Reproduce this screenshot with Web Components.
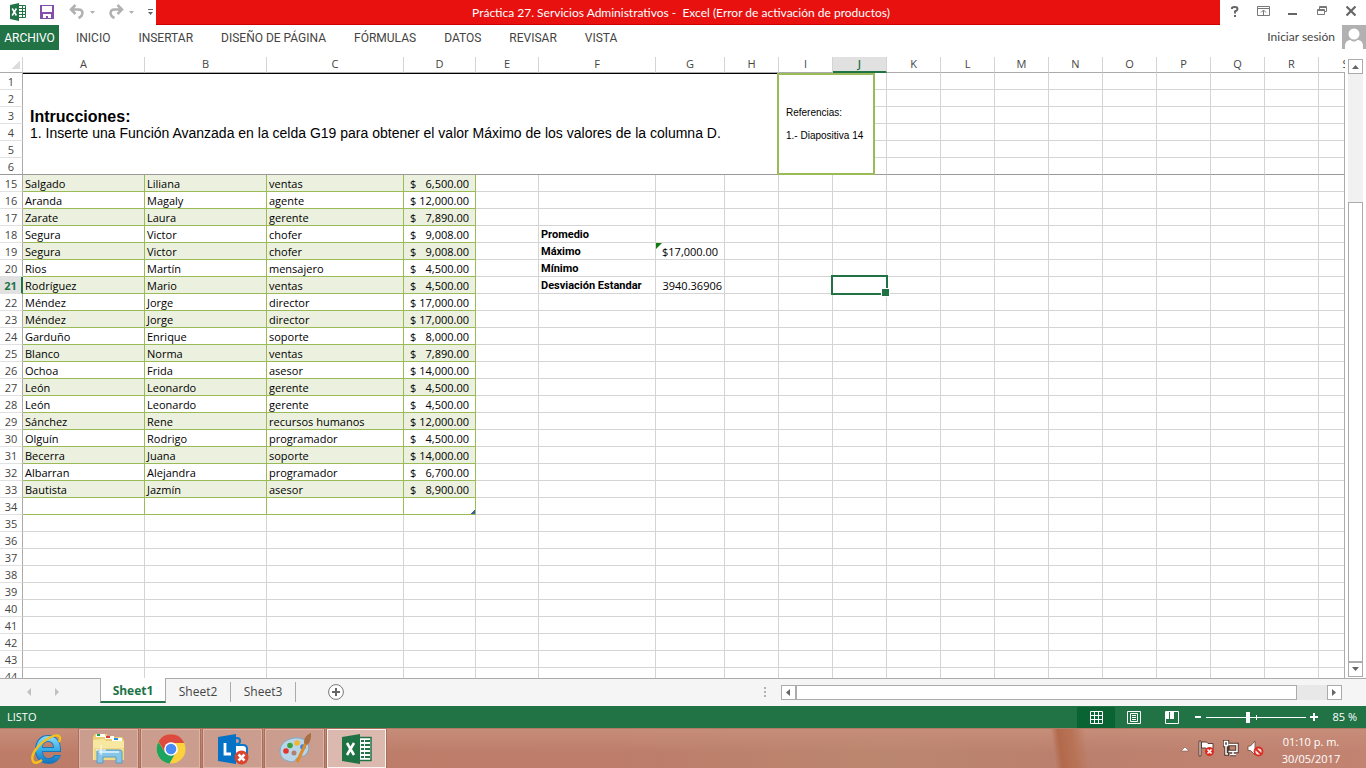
<!DOCTYPE html>
<html lang="es">
<head>
<meta charset="utf-8">
<title>Práctica 27. Servicios Administrativos - Excel</title>
<style>
html,body{margin:0;height:100%}
body{display:flex;flex-direction:column;min-height:100vh;background:#fff;color:#444;font:12px/16px "Open Sans","Noto Sans",sans-serif;overflow:hidden}
work-sheet{flex:1;min-height:0}
</style>
</head>
<body>
<title-bar>Práctica 27. Servicios Administrativos -  Excel (Error de activación de productos)</title-bar>
<ribbon-tabs></ribbon-tabs>
<work-sheet></work-sheet>
<sheet-tabs></sheet-tabs>
<status-bar>LISTO</status-bar>
<task-bar></task-bar>
<script>
const reset = `:host,*{box-sizing:border-box}button{font:inherit;color:inherit;background:none;border:0;padding:0;margin:0;cursor:default}svg{display:block}a{color:inherit;text-decoration:none}`;
const define = (name, markup, init) => customElements.define(name, class extends HTMLElement {
  connectedCallback() {
    if (this.shadowRoot) return;
    const t = document.createElement('template');
    t.innerHTML = markup.replace('<style>', '<style>' + reset);
    this.attachShadow({mode: 'open'}).append(t.content.cloneNode(true));
    if (init) init(this.shadowRoot);
  }
});

define('title-bar', `<style>
:host{display:flex;height:25px;font:12px/25px Lato,"Open Sans",sans-serif}
.qat{width:156px;display:flex;align-items:center;padding:0 0 2px 9px}
.qat button{height:22px;display:flex;align-items:center}
.x{width:31px}.s{width:29px}.u{width:40px}.r{width:39px}
h1{flex:1;margin:0;padding-right:14px;background:#e8110f;border-bottom:1px solid #c00;color:#fff;font:inherit;line-height:25px;text-align:center;white-space:pre;overflow:hidden}
.win{width:146px;display:flex;justify-content:flex-end;padding-right:1px}
.win button{width:29px;display:flex;align-items:center;justify-content:center;height:22px}
</style>
<div class="qat">
<button class="x" aria-label="Excel"><svg width="18" height="18" viewBox="0 0 18 18"><path fill="#217346" d="M1 2l9-2v18l-9-2z"/><path fill="none" stroke="#217346" d="M10 2.500h6.500v12H10"/><path stroke="#217346" d="M10 5.500h6M10 8.500h6M10 11.500h6M13.500 3v11"/><path stroke="#fff" stroke-width="1.600" d="M3.200 5.500l4.200 7M7.400 5.500l-4.200 7"/></svg></button>
<button class="s" aria-label="Guardar"><svg width="14" height="14" viewBox="0 0 14 14"><path fill="#8250ab" d="M0 0h14v14H0z"/><path fill="#fff" d="M2 1h10v6H2zM3 9h8v4H8v-2H6v2H3z"/></svg></button>
<button class="u" aria-label="Deshacer"><svg width="28" height="16" viewBox="0 0 28 16"><path fill="none" stroke="#b1b1b1" stroke-width="2.500" d="M2 5.500h7.500c5 0 5.500 6 0 8.500M6.500 1L2 5.500l4.500 4.500"/><path fill="#b1b1b1" d="M21 7h5l-2.500 3z"/></svg></button>
<button class="r" aria-label="Rehacer"><svg width="28" height="16" viewBox="0 0 28 16"><path fill="none" stroke="#b1b1b1" stroke-width="2.500" d="M13 5.500H5.500c-5 0-5.500 6 0 8.500M8.500 1L13 5.500 8.500 10"/><path fill="#b1b1b1" d="M20 7h5l-2.500 3z"/></svg></button>
<button aria-label="Personalizar"><svg width="6" height="10" viewBox="0 0 6 10"><path stroke="#666" d="M0 2.500h5"/><path fill="#666" d="M0 5h5L2.500 8z"/></svg></button>
</div>
<h1><slot></slot></h1>
<div class="win">
<button aria-label="Ayuda"><svg width="8" height="11" viewBox="0 0 8 11"><path fill="none" stroke="#666" stroke-width="2" d="M1 3V1.800Q1.500 1 4 1q2.500 0 2.500 2Q6.500 4.500 4 5.500V7.500"/><path fill="#666" d="M3 9h2v2H3z"/></svg></button>
<button aria-label="Cinta"><svg width="13" height="10" viewBox="0 0 13 10"><path fill="none" stroke="#777" d="M.5.5h12v9H.5zM1 2.500h11M6.500 9V4.500M4 6.500L6.500 4 9 6.500"/></svg></button>
<button aria-label="Minimizar"><svg width="10" height="10"><path fill="#666" d="M0 7h9v2H0z"/></svg></button>
<button aria-label="Restaurar"><svg width="10" height="10" viewBox="0 0 10 10"><path fill="none" stroke="#777" d="M2.500 3V.5h7v5H7M.5 3.500h7v5h-7z"/><path stroke="#777" d="M2 1.500h8M0 4.500h8"/></svg></button>
<button aria-label="Cerrar"><svg width="10" height="10" viewBox="0 0 10 10"><path stroke="#666" stroke-width="2.200" d="M.5.500l9 9M9.500.500l-9 9"/></svg></button>
</div>`);

define('ribbon-tabs', `<style>
:host{display:flex;height:32px;align-items:flex-start;font:12px/26px Roboto,"Open Sans",sans-serif;color:#444}
.file{background:#217346;color:#fff;width:59px;height:25px;text-align:center}
nav{flex:1;display:flex;gap:28px;padding-left:17px}
button{height:26px;white-space:nowrap}
.user{display:flex;gap:7px;font:12px/24px Lato,"Open Sans",sans-serif}
</style>
<button class="file">ARCHIVO</button>
<nav><button>INICIO</button><button>INSERTAR</button><button>DISEÑO DE PÁGINA</button><button>FÓRMULAS</button><button>DATOS</button><button>REVISAR</button><button>VISTA</button></nav>
<a class="user" href="#">Iniciar sesión<svg width="24" height="24" viewBox="0 0 24 24"><path fill="#b1b1b1" d="M0 0h24v24H0z"/><circle cx="12" cy="9" r="5.500" fill="#fff"/><path fill="#fff" d="M3 24v-3c0-4 3-6 5.500-6 2.500 2 4.500 2 7 0 3 0 5.500 2 5.500 6v3z"/></svg></a>`);

const people = [
['Salgado','Liliana','ventas','6,500.00'],['Aranda','Magaly','agente','12,000.00'],['Zarate','Laura','gerente','7,890.00'],
['Segura','Victor','chofer','9,008.00'],['Segura','Victor','chofer','9,008.00'],['Rios','Martín','mensajero','4,500.00'],
['Rodríguez','Mario','ventas','4,500.00'],['Méndez','Jorge','director','17,000.00'],['Méndez','Jorge','director','17,000.00'],
['Garduño','Enrique','soporte','8,000.00'],['Blanco','Norma','ventas','7,890.00'],['Ochoa','Frida','asesor','14,000.00'],
['León','Leonardo','gerente','4,500.00'],['León','Leonardo','gerente','4,500.00'],['Sánchez','Rene','recursos humanos','12,000.00'],
['Olguín','Rodrigo','programador','4,500.00'],['Becerra','Juana','soporte','14,000.00'],['Albarran','Alejandra','programador','6,700.00'],
['Bautista','Jazmín','asesor','8,900.00']];
const columns = 'ABCDEFGHIJKLMNOPQRS';
const money = n => `<div class="money"><span>$</span><span>${n}</span></div>`;
const extras = {
  F18: '<b>Promedio</b>', F19: '<b>Máximo</b>', F20: '<b>Mínimo</b>', F21: '<b>Desviación Estandar</b>',
  G19: '<i class="flag"></i>' + money('17,000.00'), G21: '<div class="num">3940.36906</div>',
  J21: '<i class="cursor"></i>', D34: '<i class="corner"></i>',
  I1: '<aside>Referencias:<br>1.- Diapositiva 14</aside>'
};

define('work-sheet', `<style>
:host{display:flex;overflow:hidden}
.view{flex:1;min-width:0;position:relative;overflow:hidden}
.view::after{content:"";position:absolute;top:16px;right:0;bottom:0;width:1px;background:#ababab}
table{table-layout:fixed;border-collapse:separate;border-spacing:0;width:100%;min-width:1373px;font:11px/14px "Open Sans","Noto Sans",sans-serif;color:#000}
th{font-weight:400;font-size:11px;color:#444;padding:0;text-align:center}
thead th{height:16px;line-height:13px;padding-bottom:2px;border-right:1px solid #d4d4d4;border-bottom:1px solid #ababab}
thead th.on{background:#e1e1e1;color:#217346;border-bottom:2px solid #217346;padding-bottom:1px;font-weight:600}
thead th:first-child{background:linear-gradient(135deg,transparent 50%,#dcdcdc 50%) 12px 4px/8px 8px no-repeat}
tbody th{border-right:1px solid #ababab;border-bottom:1px solid #e1e1e1;height:17px;padding-top:2px}
tbody th.on{background:#e1e1e1;color:#217346;font-weight:700;border-right:2px solid #217346}
td{height:17px;padding:2px 2px 0;border-right:1px solid #d4d4d4;border-bottom:1px solid #d4d4d4;white-space:nowrap}
.list td.g{border-color:#9bbb59}
.band td.g{background:#ebf1de}
.freeze td,.freeze th,td.note{border-bottom-color:#999}
td.note{border-top:1px solid #000;border-right-color:#9bbb59;padding:2px 7px 0;font:14px/17px "Liberation Sans",Arial,sans-serif;vertical-align:middle}
.note h2{margin:0;font-size:16px;line-height:17px}
.note p{margin:0}
b{display:block;font-family:Roboto,"Open Sans",sans-serif}
.money{display:flex;justify-content:space-between;padding:0 4px}
.num{text-align:right}
.at{position:relative}
.flag{position:absolute;left:0;top:0;border:3px solid #107c10;border-right-color:transparent;border-bottom-color:transparent}
.cursor{position:absolute;inset:-2px;border:2px solid #217346;z-index:1}
.cursor::after{content:"";position:absolute;right:-4px;bottom:-4px;width:7px;height:7px;background:#217346;border:1px solid #fff}
.corner{position:absolute;right:0;bottom:0;width:4px;height:4px;background:linear-gradient(135deg,transparent 40%,#3f5ba9 40%)}
aside{position:absolute;left:-2px;top:0;width:98px;height:102px;border:2px solid #9bbb59;background:#fff;padding:26px 7px;font:10px/23px "Liberation Sans",Arial,sans-serif;z-index:1}
.scroll{display:flex;flex-direction:column;width:15px;margin:2px 3px 1px 3px;background:#f1f1f1}
.scroll button,.thumb{border:1px solid #ababab;background:#fff}
.scroll button{height:15px;display:flex;align-items:center;justify-content:center}
.thumb{flex:460;margin:0}
.gap{flex:128}
</style>
<div class="view"><table><colgroup></colgroup><thead></thead><tbody></tbody></table></div>
<div class="scroll"><button aria-label="Subir"><svg width="8" height="5"><path fill="#666" d="M0 5l3.500-4L7 5z"/></svg></button><div class="gap"></div><div class="thumb"></div><button aria-label="Bajar"><svg width="8" height="5"><path fill="#666" d="M0 0h7L3.500 4z"/></svg></button></div>`,
root => {
  const widths = [23,122,122,137,72,63,117,69,54,54,54,54,54,54,54,54,54,54,54];
  root.querySelector('colgroup').innerHTML = widths.map(w => `<col style="width:${w}px">`).join('') + '<col>';
  root.querySelector('thead').innerHTML = '<tr><th></th>' + [...columns].map(c => `<th scope="col"${c === 'J' ? ' class="on"' : ''}>${c}</th>`).join('') + '</tr>';
  let rows = '';
  for (const r of [1,2,3,4,5,6,...Array.from({length:30}, (_, i) => i + 15)]) {
    const person = people[r - 15], list = r >= 15 && r <= 34;
    rows += `<tr class="${list ? 'list' : ''} ${person && r % 2 ? 'band' : ''} ${r === 6 ? 'freeze' : ''}"><th scope="row"${r === 21 ? ' class="on"' : ''}>${r}</th>`;
    if (r === 1) rows += '<td class="note" colspan="8" rowspan="6"><h2>Intrucciones:</h2><p>1. Inserte una Función Avanzada en la celda G19 para obtener el valor Máximo de los valores de la columna D.</p></td>';
    [...columns].forEach((c, i) => {
      if (r < 7 && i < 8) return;
      const own = person && i < 4 ? (i === 3 ? money(person[3]) : person[i]) : '';
      const extra = extras[c + r] || '';
      rows += `<td class="${list && i < 4 ? 'g' : ''}${extra ? ' at' : ''}">${own}${extra}</td>`;
    });
    rows += '</tr>';
  }
  root.querySelector('tbody').innerHTML = rows;
});

define('sheet-tabs', `<style>
:host{display:flex;height:28px;background:#f5f5f5;border-top:1px solid #ababab;font:12px/16px "Open Sans","Noto Sans",sans-serif;color:#444}
.nav{width:100px;display:flex;align-items:center;gap:22px;padding:0 0 2px 26px}
.tab{height:20px;margin-top:3px;width:65px;border-right:1px solid #ababab}
.tab.on{height:25px;margin:-1px 0 0;padding-top:3px;width:66px;background:#fff;border:solid #ababab;border-width:0 1px;border-bottom:2px solid #217346;color:#217346;font-weight:700}
.add{margin:5px 0 0 32px;height:16px}
.space{flex:1}
.dots{padding:7px 15px 0 0}
.bar{display:flex;height:15px;width:561px;margin:6px 24px 0 0;background:#e8e8e8}
.bar button,.thumb{border:1px solid #ababab;background:#fff}
.bar button{width:15px;display:flex;align-items:center;justify-content:center}
.thumb{flex:501}.gap{flex:30}
</style>
<div class="nav"><button aria-label="Anterior"><svg width="6" height="8"><path fill="#c0c0c0" d="M5 0v8L1 4z"/></svg></button><button aria-label="Siguiente"><svg width="6" height="8"><path fill="#c0c0c0" d="M1 0v8l4-4z"/></svg></button></div>
<button class="tab on">Sheet1</button><button class="tab">Sheet2</button><button class="tab">Sheet3</button>
<button class="add" aria-label="Hoja nueva"><svg width="16" height="16" viewBox="0 0 16 16"><circle cx="8" cy="8" r="7.400" fill="#fff" stroke="#777"/><path stroke="#666" stroke-width="2" d="M4 8h8M8 4v8"/></svg></button>
<div class="space"></div>
<div class="dots"><svg width="2" height="12"><path fill="#b1b1b1" d="M0 1h2v2H0zM0 5h2v2H0zM0 9h2v2H0z"/></svg></div>
<div class="bar"><button aria-label="Izquierda"><svg width="5" height="8"><path fill="#666" d="M4 0v7L0 3.500z"/></svg></button><div class="thumb"></div><div class="gap"></div><button aria-label="Derecha"><svg width="5" height="8"><path fill="#666" d="M0 0v7l4-3.500z"/></svg></button></div>`);

define('status-bar', `<style>
:host{display:flex;align-items:center;height:22px;background:#217346;color:#fff;padding:0 9px 0 7px;font:11px/22px "Open Sans","Noto Sans",sans-serif}
.l{flex:1}
.v{width:38px;height:21px;display:flex;align-items:center;justify-content:center}
.v.on{background:#0a6332}
.z{display:flex;align-items:center;padding-left:3px}
.track{position:relative;width:100px;height:12px;margin:0 3px 0 4px}
.track::after{content:"";position:absolute;left:50px;top:4px;width:1px;height:5px;background:#fff}
input{-webkit-appearance:none;appearance:none;display:block;width:100px;height:12px;margin:0;background:linear-gradient(#fff,#fff) 0 6px/100% 1px no-repeat}
input::-webkit-slider-thumb{-webkit-appearance:none;width:4px;height:11px;background:#fff}
output{width:39px;text-align:right}
</style>
<span class="l"><slot></slot></span>
<button class="v on" aria-label="Normal"><svg width="13" height="13"><path fill="none" stroke="#fff" d="M.5.5h12v12H.5zM4.500 0v13M8.500 0v13M0 4.500h13M0 8.500h13"/></svg></button>
<button class="v" aria-label="Diseño de página"><svg width="14" height="13"><path fill="none" stroke="#fff" d="M.5.5h13v12H.5zM3.500 2.500h7v8h-7zM5 4.500h4M5 6.500h4M5 8.500h4"/></svg></button>
<button class="v" aria-label="Saltos de página"><svg width="14" height="13"><path fill="none" stroke="#fff" d="M.5.5h13v12H.5z"/><path fill="#fff" d="M1 1h3v7H1zM5 1h4v7H5z"/></svg></button>
<div class="z"><button aria-label="Alejar"><svg width="8" height="10"><path fill="#fff" d="M1 4h6v2H1z"/></svg></button><div class="track"><input type="range" min="0" max="100" value="42" aria-label="Zoom"></div><button aria-label="Acercar"><svg width="9" height="10"><path fill="#fff" d="M1 4h8v2H1zM4 1h2v8H4z"/></svg></button></div>
<output>85 %</output>`);

define('task-bar', `<style>
:host{display:flex;height:40px;align-items:flex-start;border-top:1px solid #b07a66;color:#fff;font:11px/17px "Open Sans","Noto Sans",sans-serif;
background:linear-gradient(82deg,transparent 77%,#b2694c 77.500%,#b87356 78.500%,transparent 79.500%),linear-gradient(#c68d79,transparent 60%),linear-gradient(90deg,#bd7c68,#bd7d6a 45%,#bb866f 65%,#bb806d 78%,#c28371)}
.apps{display:flex;gap:3px;padding-left:17px;flex:1}
.apps button{width:59px;height:39px;border:1px solid #dcb5a6;background:#cb9d8f;display:flex;align-items:center;justify-content:center;box-shadow:0 0 0 1px #a96f5d}
.apps .plain{background:none;border:0;box-shadow:none}
.apps .on{background:#dbb9ae;border-color:#fbf3f0}
.tray{display:flex;align-items:center;height:39px;gap:8px;padding-right:19px}
.clock{width:72px;text-align:center;padding-top:3px;margin-left:3px}
</style>
<div class="apps">
<button class="plain" aria-label="Internet Explorer"><svg width="32" height="32" viewBox="0 0 32 32"><defs><linearGradient id="e" x2="0" y2="1"><stop stop-color="#8edcf8"/><stop offset=".5" stop-color="#38b0ea"/><stop offset="1" stop-color="#1673bd"/></linearGradient></defs><path fill="#1b76b8" fill-rule="evenodd" d="M17 2c8 0 13 6 13 15v2H12c0 4 3 6 6 6 2 0 4-1 5-3h7c-2 6-7 9-12 9C9 31 4 25 4 17 4 8 9 2 17 2zM12 14h10c0-3-2-5-5-5s-5 2-5 5z"/><path fill="url(#e)" fill-rule="evenodd" d="M17 3c7 0 12 5 12 13v2H11c0 5 3 8 7 8 3 0 5-1 6-3h5c-2 5-6 7-11 7C10 30 5 24 5 17 5 9 10 3 17 3zM11 15h12c0-4-2-7-6-7s-6 3-6 7z"/><path fill="none" stroke="#f5c11b" stroke-width="2.400" d="M28 9c3-6-1-9-10-4C7 11-1 22 2 28c1 3 5 2 9-1"/></svg></button>
<button aria-label="Explorador"><svg width="33" height="31" viewBox="0 0 33 31"><path fill="#e8cf72" d="M1 4l2-3h12v3h15l2 3v20H1z"/><path fill="#fff" d="M4 1h9v3H4zM13 3h9v3h-9zM20 5h10v3H20z"/><path fill="#18a83b" d="M5 1h3v2H5z"/><path fill="#d9402b" d="M14 3h4v2h-4z"/><path fill="#2a8ee8" d="M22 5h4v2h-4z"/><path fill="#f7e7a0" d="M1 7l11-1 2 2h18v19H1z"/><path fill="#f1da85" d="M2 15h30v12H2z"/><path fill="#86c5e8" stroke="#5b9cc4" d="M5 30V18q0-1 2-1h20q3 0 3 2v11h-6v-6H11v6z"/><path stroke="#cdeafa" stroke-width="2" d="M7 19h20"/><path stroke="#fff" d="M9 12v10M4 17h10"/></svg></button>
<button aria-label="Chrome"><svg width="30" height="30" viewBox="0 0 30 30"><circle cx="15" cy="15" r="14.500" fill="#fbd23c"/><path fill="#1da462" d="M2.400 8A14.500 14.500 0 0 0 13.500 29.500L20 18 9 18z"/><path fill="#dc4b3e" d="M2.400 7.500a14.500 14.500 0 0 1 25.200 0L28 9H15L9 18z"/><circle cx="15" cy="15" r="6.800" fill="#fff"/><circle cx="15" cy="15" r="5.300" fill="#4a8af4"/></svg></button>
<button aria-label="Lync"><svg width="32" height="32" viewBox="0 0 32 32"><circle cx="20" cy="8" r="3" fill="none" stroke="#0a78cc" stroke-width="2"/><path fill="#fff" stroke="#0a78cc" stroke-width="2" d="M17 12h9q4 0 4 4v6H17z"/><path fill="#0672c6" d="M1 4l18-3v30L1 28z"/><path fill="none" stroke="#fff" stroke-width="2.800" d="M8 10v11h6"/><circle cx="24.500" cy="24.500" r="7" fill="#d9452f"/><path stroke="#fff" stroke-width="2.500" d="M21.500 21.500l6 6M27.500 21.500l-6 6"/></svg></button>
<button aria-label="Paint"><svg width="34" height="31" viewBox="0 0 34 31"><path fill="#b9d5e8" stroke="#7fa8c4" d="M2 18C2 9 12 4 21 5c9 1 12 9 8 15-3 5-7 2-10 5-2 3-4 5-9 3-5-1-8-5-8-10z"/><circle cx="8" cy="18" r="2.800" fill="#e0352f"/><circle cx="12" cy="12.500" r="2.800" fill="#3ca03c"/><circle cx="19" cy="10" r="2.800" fill="#f2b632"/><circle cx="25" cy="14" r="2.800" fill="#3585d8"/><circle cx="16" cy="20" r="2.500" fill="#b07f70"/><path stroke="#e08a2c" stroke-width="3" d="M19 29l9-19"/><path fill="#a96f42" d="M26 10c0-5 2-8 7-10 0 4 0 9-4 12z"/></svg></button>
<button class="on" aria-label="Excel"><svg width="32" height="32" viewBox="0 0 32 32"><path fill="#fff" stroke="#217346" stroke-width="1.500" d="M17 4.500h13v23H17z"/><path stroke="#217346" stroke-width="2" d="M20 8h3M24 8h5M20 12h3M24 12h5M20 16h3M24 16h5M20 20h3M24 20h5M20 24h3M24 24h5"/><path fill="#1f7244" d="M1 4l18-3v30L1 28z"/><path stroke="#fff" stroke-width="2.500" d="M6 10l7 12M13 10L6 22"/></svg></button>
</div>
<div class="tray">
<svg width="10" height="6"><path fill="#fff" stroke="#7a5a50" stroke-width=".6" d="M1 5l4-4 4 4z"/></svg>
<svg width="17" height="17" viewBox="0 0 17 17"><path fill="#fff" stroke="#5a3d34" d="M1 1h2v15H1zM3.500 2h5l1.500 1.500h5V9H9L8 8H3.500z"/><circle cx="11.500" cy="11.500" r="4.500" fill="#dc2b20"/><path stroke="#fff" stroke-width="1.600" d="M9.500 9.500l4 4M13.500 9.500l-4 4"/></svg>
<svg width="16" height="17" viewBox="0 0 16 17"><path fill="none" stroke="#4d342c" stroke-width="3.400" d="M5 4.500h9v7H5zM7 14.500h6M10 12v2M3 6v8h3M1.500 1.500h3v4h-3z"/><path fill="none" stroke="#fff" stroke-width="1.500" d="M5.500 4.500H14v7H5.500M7 14.500h6M10 12v2M3 6v8h2M1.500 1.500h3v4h-3z"/></svg>
<svg width="17" height="17" viewBox="0 0 17 17"><path fill="#fff" stroke="#6a4a40" stroke-width=".8" d="M1 6h2.500L8 1v14l-4.500-4.500H1z"/><circle cx="11.500" cy="11.500" r="4" fill="#f6dedb" stroke="#dc2b20" stroke-width="1.800"/><path stroke="#dc2b20" stroke-width="1.800" d="M9 9l5 5"/></svg>
<div class="clock">01:10 p. m.<br>30/05/2017</div>
</div>`);
</script>
</body>
</html>
